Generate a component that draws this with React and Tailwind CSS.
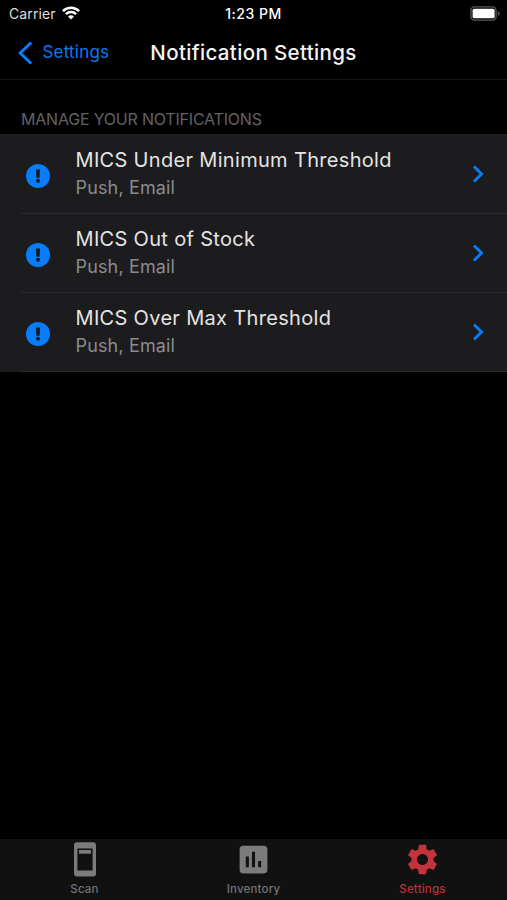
import React from 'react';
import { MdAssessment, MdSettings } from 'react-icons/md';

const notifications = [
  { id: 1, title: 'MICS Under Minimum Threshold', channels: 'Push, Email' },
  { id: 2, title: 'MICS Out of Stock', channels: 'Push, Email' },
  { id: 3, title: 'MICS Over Max Threshold', channels: 'Push, Email' },
];

const WifiIcon = () => (
  <svg className="-mt-px" width="18" height="14" viewBox="0 0 18 14" fill="none" stroke="#fff" strokeWidth="2.5">
    <path d="M0.9 5.1a11.6 11.6 0 0 1 16.2 0" />
    <path d="M3.9 8.2a7.3 7.3 0 0 1 10.2 0" />
    <path d="M9 13.6 6 10.6a4.3 4.3 0 0 1 6 0z" fill="#fff" stroke="none" />
  </svg>
);

const BatteryIcon = () => (
  <svg width="31" height="15" viewBox="0 0 31 15">
    <rect x="0.9" y="0.9" width="25.2" height="13.2" rx="3.6" fill="none" stroke="#59595b" strokeWidth="1.4" />
    <rect x="2.6" y="2.7" width="22" height="9.6" rx="1.6" fill="#fff" />
    <path d="M27.8 5.2c2.6.8 2.6 3.8 0 4.6z" fill="#59595b" />
  </svg>
);

const ScanIcon = () => (
  <svg width="22" height="35" viewBox="0 0 22 35" fill="#7b7b7b">
    <path
      fillRule="evenodd"
      d="M3 0.3h16a3 3 0 0 1 3 3v28.2a3 3 0 0 1-3 3H3a3 3 0 0 1-3-3V3.3a3 3 0 0 1 3-3zM3.4 6.6v22h15.2v-22z"
    />
    <rect x="5" y="8" width="12" height="3.7" />
  </svg>
);

const AlertIcon = () => (
  <svg width="24" height="24" viewBox="0 0 24 24">
    <circle cx="12" cy="12" r="12" fill="#067dfd" />
    <path d="M9.9 5.5h4.2l-.5 8.3h-3.2z" fill="#1c1c1e" />
    <circle cx="12" cy="16.8" r="2" fill="#1c1c1e" />
  </svg>
);

const StatusBar = () => (
  <div className="grid h-[27px] grid-cols-3 items-center pr-[6px] pl-[6px] leading-none text-white">
    <div className="flex items-center gap-[6px] pl-[3px]">
      <span className="text-[14px] tracking-[0.1px] text-[#dedede]">Carrier</span>
      <WifiIcon />
    </div>
    <span className="pt-px text-center text-[14px] font-medium tracking-[0.5px]">1:23 PM</span>
    <div className="flex justify-end">
      <BatteryIcon />
    </div>
  </div>
);

const NavBar = () => (
  <header className="grid h-[53px] grid-cols-[130px_1fr_130px] items-center border-b border-[#171717]">
    <button className="-mt-px flex items-center gap-[9.5px] pl-[18px] text-[17px] tracking-[0.2px] text-[#0a7af0]">
      <svg width="15" height="24" viewBox="0 0 15 24" fill="none" stroke="#067dfd" strokeWidth="3">
        <path d="M13.2 1.5 2.2 12l11 10.5" />
      </svg>
      <span className="pt-px">Settings</span>
    </button>
    <h1 className="pt-px text-center text-[20.5px] font-medium tracking-[0.35px] whitespace-nowrap text-[#f4f4f4]">
      Notification Settings
    </h1>
  </header>
);

const NotificationRow = ({ title, channels }) => (
  <li className="flex h-[79px] items-stretch pl-[21px]">
    <div className="flex flex-1 items-center border-b border-[#29292b] pr-[23px] pl-[5px]">
      <div className="mt-[3px]">
        <AlertIcon />
      </div>
      <div className="-mt-px ml-[25.5px] flex-1">
        <p className="text-[20px] leading-[28px] tracking-[0.32px] whitespace-nowrap text-[#e4e4e5]">{title}</p>
        <p className="text-[18px] leading-[27px] tracking-[0.15px] text-[#8b8b8f]">{channels}</p>
      </div>
      <svg width="12" height="18" viewBox="0 0 12 18" fill="none" stroke="#067dfd" strokeWidth="2.8">
        <path d="M2 1.5 9.5 9 2 16.5" />
      </svg>
    </div>
  </li>
);

const Tab = ({ label, active, children }) => (
  <button
    className={`flex flex-col items-center text-[11.5px] font-medium tracking-[0.2px] ${
      active ? 'text-[#bd2f35]' : 'text-[#737373]'
    }`}
  >
    <span className="mt-[2px] flex h-[37px] items-center">{children}</span>
    <span className="mt-[4px] leading-[14px]">{label}</span>
  </button>
);

const App = () => (
  <div className="flex h-screen w-full flex-col overflow-hidden bg-black font-['Inter',sans-serif]">
    <StatusBar />
    <NavBar />
    <main className="flex-1">
      <h2 className="flex h-[54px] items-end pb-[4px] pl-[21px] text-[16px] leading-[22px] tracking-[-0.2px] text-[#626266]">
        MANAGE YOUR NOTIFICATIONS
      </h2>
      <ul className="border-t border-[#222224] bg-[#1c1c1e]">
        {notifications.map((n) => (
          <NotificationRow key={n.id} title={n.title} channels={n.channels} />
        ))}
      </ul>
    </main>
    <nav className="grid h-[61px] grid-cols-3 bg-[#111111]">
      <Tab label="Scan">
        <ScanIcon />
      </Tab>
      <Tab label="Inventory">
        <MdAssessment size={37} color="#7b7b7b" />
      </Tab>
      <Tab label="Settings" active>
        <MdSettings size={37} color="#c4333b" />
      </Tab>
    </nav>
  </div>
);

export default App;
